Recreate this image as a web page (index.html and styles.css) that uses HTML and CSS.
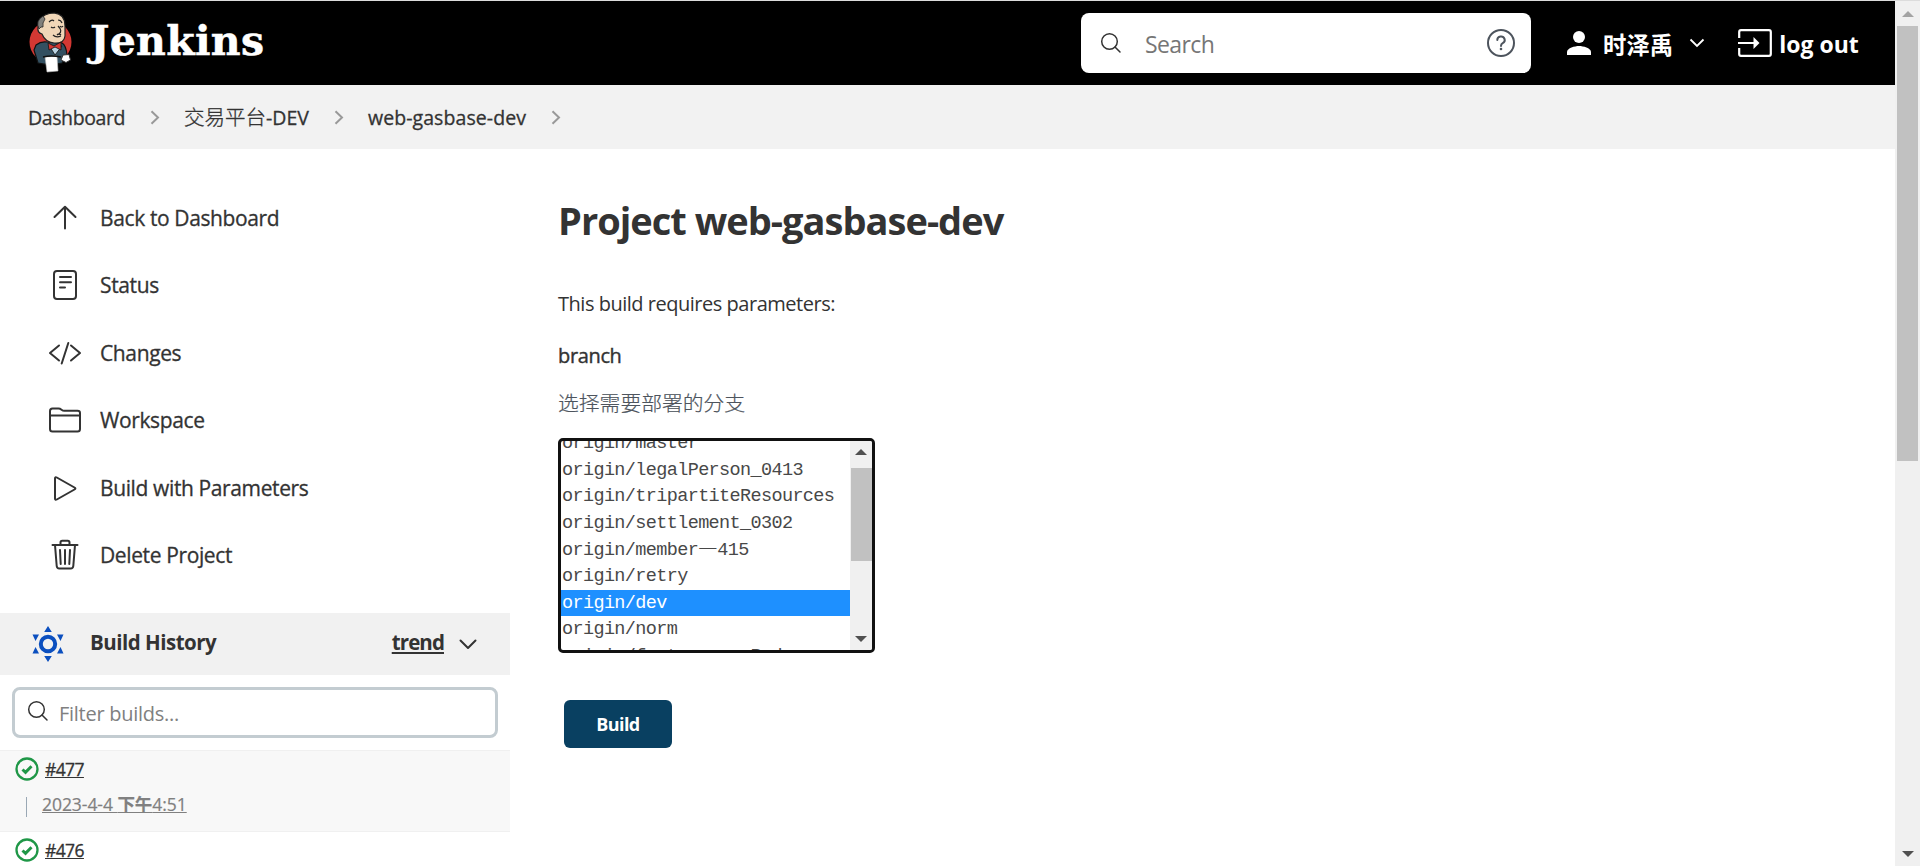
FILE: index.html
```html
<!DOCTYPE html>
<html lang="en">
<head>
<meta charset="utf-8">
<title>web-gasbase-dev [Jenkins]</title>
<link rel="stylesheet" href="styles.css">
</head>
<body>
<div class="page">
  <header class="header">
    <a class="brand">
      <svg class="mascot" width="44" height="61" viewBox="0 0 44 61">
        <ellipse cx="21.500" cy="30" rx="21" ry="21" fill="#d33833"/>
        <path d="M7 33 Q12 29 18 30 L33 31 Q37 33 38 43 L33 51 Q22 54 9 51 L5 38Z" fill="#335061" stroke="#111" stroke-width="1.200"/>
        <path d="M21 35 L26 43 L33 34 Z" fill="#b9d3e2" stroke="#111" stroke-width=".8"/>
        <path d="M11 8 Q15 1 25 1 Q36 2 36 14 L36 24 Q35 32 25 31 Q16 30 13 22 Q8 21 9 15Z" fill="#f0d6b7" stroke="#222" stroke-width="1.200"/>
        <path d="M10 17 Q6 9 14 4 L16 7 Q13 11 14 15 L12 15Z" fill="#81807c" stroke="#222" stroke-width=".8"/>
        <path d="M20 10q3-3 5-1M29 8q3 0 4 3M22 15q2 1.500 4 0M31 14q1.500 2 3 0M29 14q5 5 1 8M24 23q3 3 8 1M28 23q2-2 4 0" fill="none" stroke="#222" stroke-width="1.200"/>
        <path d="M19 31 L25 34 L32 30 L32 38 L26 35 L20 38Z" fill="#d33833" stroke="#111" stroke-width=".8"/>
        <path d="M16 45 L28 44 L29 59 L18 60Z" fill="#fff" stroke="#bbb" stroke-width=".6"/>
        <path d="M14 45q8-2 18 0" fill="none" stroke="#111" stroke-width="1.500"/>
        <path d="M34 43 L40 42.500 L41.500 48 L37 50.500 L32 48Z" fill="#fff" stroke="#333"/>
      </svg>
      <span class="wordmark">Jenkins</span>
    </a>
    <div class="search">
      <svg width="22" height="22" viewBox="0 0 22 22" fill="none" stroke="#333" stroke-width="1.500" stroke-linecap="round"><circle cx="9.500" cy="9.500" r="7.800"/><path d="M15 15l5 5"/></svg>
      <span class="search-text">Search</span>
      <svg width="30" height="30" viewBox="0 0 30 30" fill="none" stroke="#4d545d" stroke-width="2"><circle cx="15" cy="15" r="13"/><path d="M11.300 12a3.700 3.500 0 1 1 5.400 3.100Q15 16 15 18" stroke-linecap="round"/><circle cx="15" cy="21" r="1.300" fill="#4d545d" stroke="none"/></svg>
    </div>
    <a class="user">
      <svg width="24" height="24" viewBox="0 0 24 24" fill="#fff"><circle cx="12" cy="6" r="6"/><path d="M0 24v-3c0-4 8-6 12-6s12 2 12 6v3z"/></svg>
      <span class="user-name">时泽禹</span>
      <svg class="user-arrow" width="16" height="10" viewBox="0 0 16 10" fill="none" stroke="#fff" stroke-width="1.800"><path d="M1.500 1.500L8 8l6.500-6.500"/></svg>
    </a>
    <a class="logout">
      <svg width="34" height="28" viewBox="0 0 34 28" fill="none" stroke="#fff" stroke-width="2.200"><path d="M1.200 9V3q0-1.800 1.800-1.800h28q1.800 0 1.800 1.800v22q0 1.800-1.800 1.800H3q-1.800 0-1.800-1.800v-6M0 14h18"/><path d="M15.500 8l6 6-6 6z" fill="#fff" stroke="none"/></svg>
      <span class="logout-text">log out</span>
    </a>
  </header>

  <nav class="crumbs">
    <span class="crumb">Dashboard</span>
    <svg class="sep" width="10" height="15" viewBox="0 0 10 15"><path d="M1.500 1.200L8 7.500l-6.500 6.300"/></svg>
    <span class="crumb crumb-cn"><span class="cn">交易平台</span>-DEV</span>
    <svg class="sep" width="10" height="15" viewBox="0 0 10 15"><path d="M1.500 1.200L8 7.500l-6.500 6.300"/></svg>
    <span class="crumb crumb-job">web-gasbase-dev</span>
    <svg class="sep" width="10" height="15" viewBox="0 0 10 15"><path d="M1.500 1.200L8 7.500l-6.500 6.300"/></svg>
  </nav>

  <div class="body">
    <aside class="side">
      <ul class="tasks">
        <li class="task"><svg viewBox="0 0 34 34"><path d="M17 27.500V6M6.500 16L17 5.700 27.500 16"/></svg><span>Back to Dashboard</span></li>
        <li class="task"><svg viewBox="0 0 34 34"><rect x="6" y="3" width="22" height="28" rx="3"/><path d="M12 9h11M12 14.300h11M12 19.500h5"/></svg><span>Status</span></li>
        <li class="task"><svg viewBox="0 0 34 34"><path d="M11 9.500L2 17l9 7.500M23 9.500l9 7.500-9 7.500M20.300 7l-6.600 20.500"/></svg><span>Changes</span></li>
        <li class="task"><svg viewBox="0 0 34 34"><path d="M2 26V8q0-2.500 2.500-2.500h6q1.500 0 3 1.200t3 1.100H29.500Q32 7.800 32 10v16q0 2.500-2.500 2.500h-25Q2 28.500 2 26zM2 12.500h30"/></svg><span>Workspace</span></li>
        <li class="task"><svg viewBox="0 0 34 34"><path d="M7 7.500v20q0 2 1.800 1L26.500 18.500q1.800-1 0-2L8.800 6.500Q7 5.500 7 7.500z"/></svg><span>Build with Parameters</span></li>
        <li class="task"><svg viewBox="0 0 34 34"><path d="M4.500 7h25M7 7l1.700 21q.3 2.500 2.500 2.500h11.600q2.200 0 2.500-2.500L27 7M12.500 7V4.500q0-1.700 1.700-1.700h5.600q1.700 0 1.700 1.700V7M12 12l.7 14M17 12v14M22 12l-.7 14"/></svg><span>Delete Project</span></li>
      </ul>
      <section class="history">
        <div class="history-head">
          <svg width="32" height="38" viewBox="0 0 32 38" fill="#0b4fbf"><circle cx="16" cy="19" r="7.200" fill="none" stroke="#0b4fbf" stroke-width="4"/><path d="M16 1l3.800 6h-7.600zM16 37l3.800-6h-7.600zM.5 9.500h6.500L3.500 16zM31.500 9.500H25l3.500 6.500zM.5 28.500h6.500L3.500 22zM31.500 28.500H25l3.500-6.500z"/></svg>
          <span class="history-title">Build History</span>
          <a class="trend">trend</a>
          <svg width="18" height="11" viewBox="0 0 18 11" fill="none" stroke="#333" stroke-width="2" stroke-linecap="round" stroke-linejoin="round"><path d="M1.500 1.500L9 9l7.500-7.500"/></svg>
        </div>
        <div class="filter">
          <svg width="22" height="22" viewBox="0 0 22 22" fill="none" stroke="#333" stroke-width="1.500" stroke-linecap="round"><circle cx="9.500" cy="9.500" r="7.800"/><path d="M15 15l5 5"/></svg>
          <span class="filter-text">Filter builds...</span>
        </div>
        <div class="build build-odd">
          <div class="build-line"><svg width="24" height="24" viewBox="0 0 24 24" fill="none" stroke="#1f9747"><circle cx="12" cy="12" r="10.500" stroke-width="2.300"/><path d="M7.500 12.500l3 2.800 6-6" stroke-width="3"/></svg><a class="num">#477</a></div>
          <div class="build-date"><a class="date">2023-4-4 <b>下午</b>4:51</a></div>
        </div>
        <div class="build">
          <div class="build-line"><svg width="24" height="24" viewBox="0 0 24 24" fill="none" stroke="#1f9747"><circle cx="12" cy="12" r="10.500" stroke-width="2.300"/><path d="M7.500 12.500l3 2.800 6-6" stroke-width="3"/></svg><a class="num">#476</a></div>
        </div>
      </section>
    </aside>

    <main class="main">
      <h1 class="title">Project web-gasbase-dev</h1>
      <p class="intro">This build requires parameters:</p>
      <div class="param">branch</div>
      <div class="desc">选择需要部署的分支</div>
      <div class="listbox">
        <div class="options">
          <div class="option">origin/master</div>
          <div class="option">origin/legalPerson_0413</div>
          <div class="option">origin/tripartiteResources</div>
          <div class="option">origin/settlement_0302</div>
          <div class="option">origin/member<span class="dash">—</span>415</div>
          <div class="option">origin/retry</div>
          <div class="option option-on">origin/dev</div>
          <div class="option">origin/norm</div>
          <div class="option">origin/feature_newRedux</div>
        </div>
        <div class="inner-bar">
          <i class="up"></i><div class="inner-thumb"></div><i class="down"></i>
        </div>
      </div>
      <a class="submit">Build</a>
    </main>
  </div>
</div>
<div class="scrollbar"><i class="up up-off"></i><div class="thumb"></div><i class="down"></i></div>
</body>
</html>
```
FILE: styles.css
```css
* { box-sizing: border-box; }
body {
  margin: 0;
  height: 866px;
  overflow: hidden;
  display: flex;
  background: #fff;
  color: #333;
  font-family: "Open Sans", "Noto Sans", "Noto Sans CJK SC", sans-serif;
  border-top: 1px solid #dcdcdc;
}
svg { display: block; flex: none; }
.page { width: 1895px; height: 865px; overflow: hidden; flex: none; }
.header { height: 84px; background: #000; color: #fff; display: flex; align-items: center; }
.brand { display: flex; width: 1081px; padding: 0 0 2px 29px; align-items: center; }
.wordmark { margin-left: 17px; padding-bottom: 2px; font: bold 41px/50px "DejaVu Serif", serif; letter-spacing: 0.300px; -webkit-text-stroke: 0.500px; }
.search { width: 450px; height: 60px; background: #fff; border-radius: 8px; display: flex; align-items: center; padding: 0 15px 0 19px; }
.search-text { color: #767676; font-size: 23px; margin-left: 23px; padding-top: 2px; letter-spacing: -0.600px; }
.search svg:last-child { margin-left: auto; }
.user { display: flex; align-items: center; margin-left: 36px; }
.user-name { font: bold 23.400px/30px "Noto Sans CJK SC", sans-serif; margin-left: 12px; padding-top: 2px; }
.user-arrow { margin-left: 16px; }
.logout { display: flex; align-items: center; margin-left: 33px; }
.logout-text { font-weight: 700; font-size: 23px; margin-left: 7px; padding-top: 2px; }
.crumbs { height: 64px; background: #f2f2f2; display: flex; align-items: center; padding-left: 28px; font-size: 19.500px; -webkit-text-stroke: 0.300px; }
.crumb { letter-spacing: -0.400px; }
.crumb-cn { letter-spacing: 0; }
.cn { font: 300 20.500px/26px "Noto Sans CJK SC", sans-serif; }
.crumb-job { letter-spacing: 0.080px; }
.sep { fill: none; stroke: #999; stroke-width: 2; margin: 0 24px 0 25px; }
.body { display: flex; }
.side { width: 510px; padding-top: 35px; }
.tasks { list-style: none; margin: 0; padding: 0 0 24px 48px; }
.task { height: 67.500px; display: flex; align-items: center; font-size: 21px; letter-spacing: -0.380px; -webkit-text-stroke: 0.300px; }
.task svg { width: 34px; height: 34px; fill: none; stroke: #333; stroke-width: 2; stroke-linecap: round; stroke-linejoin: round; }
.task span { margin-left: 18px; }
.history-head { height: 62px; background: #f1f1f1; display: flex; align-items: center; padding: 0 33px 0 32px; font-size: 20.500px; font-weight: 700; }
.history-title { margin-left: 26px; margin-top: -4px; letter-spacing: -0.500px; }
.trend { margin: -4px 15px 0 auto; text-decoration: underline; letter-spacing: -0.900px; }
.filter { margin: 12px; height: 51px; border: 3px solid #c3ccd1; border-radius: 8px; display: flex; align-items: center; padding-left: 12px; font-size: 20px; color: #808080; }
.filter svg { margin-top: -3px; }
.filter-text { margin-left: 10px; padding-top: 1px; letter-spacing: -0.270px; }
.build { height: 81px; border-top: 1px solid #f0f0f0; padding: 6px 0 0 15px; }
.build-odd { background: #f8f8f8; }
.build-line { display: flex; height: 24px; align-items: center; }
.num { margin-left: 6px; font-size: 17.500px; letter-spacing: -0.600px; text-decoration: underline; -webkit-text-stroke: 0.300px; }
.build-date { margin: 16px 0 0 11px; height: 20px; border-left: 1px solid #9aa8b5; padding-left: 15px; display: flex; align-items: center; }
.date { margin-top: -7px; color: #808080; font-size: 17.500px; letter-spacing: -0.050px; text-decoration: underline; white-space: nowrap; -webkit-text-stroke: 0.200px; }
.main { padding: 45px 0 0 48px; }
.title { margin: 0; font-size: 38px; line-height: 52px; font-weight: 700; letter-spacing: -0.980px; }
.intro { margin: 44px 0 0; font-size: 20px; line-height: 28px; letter-spacing: -0.480px; }
.param { margin-top: 24px; font-size: 20px; line-height: 28px; letter-spacing: -0.350px; -webkit-text-stroke: 0.400px; }
.desc { margin-top: 18px; font: 300 20.800px/28px "Noto Sans CJK SC", sans-serif; color: #4d545d; -webkit-text-stroke: 0.200px; }
.listbox { margin-top: 22px; width: 317px; height: 215px; border: 3px solid #111; border-radius: 5px; display: flex; overflow: hidden; }
.options { width: 289px; margin-top: -11px; }
.option { height: 26.600px; line-height: 27px; padding-left: 1px; font-family: "Liberation Mono", monospace; font-size: 18.500px; letter-spacing: -0.630px; white-space: nowrap; color: #484848; }
.option-on { background: #1e90ff; color: #fff; }
.dash { font: 300 21.600px/20px "Noto Sans CJK SC", sans-serif; letter-spacing: 0; }
.inner-bar { width: 22px; background: #f0f0f0; display: flex; flex-direction: column; align-items: center; padding: 8px 0; flex: none; }
.up, .down { width: 0; height: 0; border: 6px solid transparent; flex: none; }
.up { border-top: 0; border-bottom-color: #505050; }
.down { border-bottom: 0; border-top-color: #505050; margin-top: auto; }
.inner-thumb { width: 21px; height: 93px; background: #c1c1c1; margin-top: 13px; }
.submit { margin: 47px 0 0 6px; width: 108px; height: 48px; border-radius: 6px; background: #094061; color: #fff; font-weight: 700; font-size: 18px; letter-spacing: -0.600px; display: flex; align-items: center; justify-content: center; }
.scrollbar { width: 25px; height: 865px; background: #f0f0f0; display: flex; flex-direction: column; align-items: center; padding: 10px 0 9px; }
.up-off { border-bottom-color: #a3a3a3; }
.thumb { width: 21px; height: 435px; background: #c1c1c1; margin-top: 9px; }
```
